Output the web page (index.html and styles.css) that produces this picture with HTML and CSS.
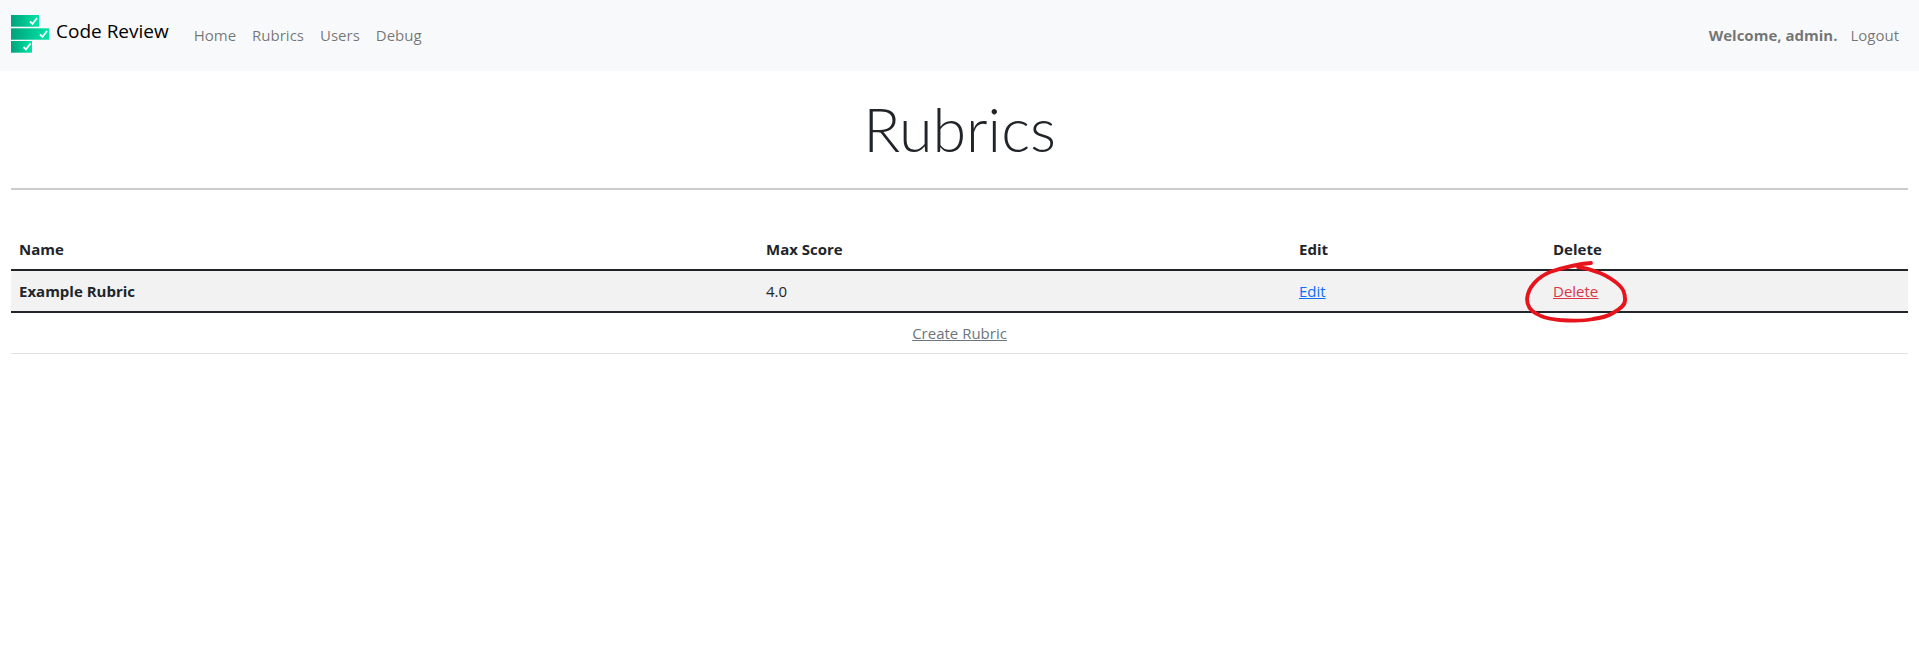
FILE: index.html
```html
<!DOCTYPE html>
<html lang="en">
<head>
    <meta charset="UTF-8">
    <title>Rubrics</title>
    <link rel="stylesheet" href="styles.css">
</head>
<body>
    <nav class="navbar">
        <a class="brand" href="#">
            <svg class="logo" width="38" height="38" viewBox="0 0 38 38">
                <defs>
                    <linearGradient id="bar" x1="0" y1="0" x2="1" y2="0">
                        <stop offset="0" stop-color="#00a27c"/>
                        <stop offset="1" stop-color="#00e6a8"/>
                    </linearGradient>
                </defs>
                <rect x="0" y="0" width="28" height="11.700" fill="url(#bar)"/>
                <rect x="0" y="13.300" width="38" height="11.400" fill="url(#bar)"/>
                <rect x="0" y="26" width="21" height="11.700" fill="url(#bar)"/>
                <path d="M19 6.500l2.500 2.500 4.500-6M29 19.500l2.500 2.500 4.500-6M12.500 32l2.500 2.500 4.500-6" fill="none" stroke="#fff" stroke-width="1.800"/>
            </svg>
            <span>Code Review</span>
        </a>
        <ul class="nav-links">
            <li><a href="#">Home</a></li>
            <li><a href="#">Rubrics</a></li>
            <li><a href="#">Users</a></li>
            <li><a href="#">Debug</a></li>
        </ul>
        <div class="nav-user">
            <b>Welcome, admin.</b>
            <a href="#">Logout</a>
        </div>
    </nav>

    <main class="content">
        <h1 class="title">Rubrics</h1>
        <hr class="rule">

        <table class="rubrics">
            <colgroup>
                <col class="col-name">
                <col class="col-score">
                <col class="col-edit">
                <col class="col-delete">
            </colgroup>
            <thead>
                <tr>
                    <th>Name</th>
                    <th>Max Score</th>
                    <th>Edit</th>
                    <th>Delete</th>
                </tr>
            </thead>
            <tbody>
                <tr>
                    <th>Example Rubric</th>
                    <td>4.0</td>
                    <td><a class="edit" href="#">Edit</a></td>
                    <td><a class="delete" href="#">Delete</a></td>
                </tr>
            </tbody>
            <tfoot>
                <tr>
                    <td colspan="4"><a class="create" href="#">Create Rubric</a></td>
                </tr>
            </tfoot>
        </table>
    </main>

    <!-- red pen scribble around the delete link -->
    <svg class="scribble" width="1919" height="669" viewBox="0 0 1919 669">
        <path d="M1591 263 C1578 264 1562 268 1550 272 C1538 277 1528 287 1527 299 C1527 307 1531 311 1537 314 C1545 319 1552 319 1560 320 C1572 321 1584 321 1593 319 C1601 318 1608 316 1613 313 C1620 309 1626 305 1625 299 C1625 293 1624 290 1620 286 C1614 280 1607 276 1600 273 C1593 270 1586 268 1578 267" fill="none" stroke="#e8141c" stroke-width="3.800" stroke-linecap="round"/>
    </svg>
</body>
</html>
```

FILE: styles.css
```css
body {
    font-family: "Open Sans", "Noto Sans", sans-serif;
    font-size: 15px;
    line-height: 24px;
    color: #212529;
    background-color: #fff;
    margin: 0;
}
a {
    color: #0d6efd;
}
.navbar {
    display: flex;
    align-items: center;
    height: 69px;
    padding: 0 12px 2px 11px;
    background-color: #f8f9fa;
}
.brand {
    display: flex;
    align-items: center;
    margin-right: 17px;
    margin-bottom: 7px;
    font-size: 19px;
    color: #000;
    text-decoration: none;
}
.logo {
    margin-top: 6px;
    margin-right: 7px;
}
.nav-links {
    display: flex;
    list-style: none;
    margin: 0;
    padding: 0;
    flex: 1;
}
.nav-links a, .nav-user a {
    display: block;
    padding: 8px;
    color: rgba(0, 0, 0, 0.55);
    text-decoration: none;
}
.nav-user {
    display: flex;
    align-items: center;
    color: rgba(0, 0, 0, 0.55);
}
.nav-user b {
    margin-right: 5px;
}
.content {
    padding: 0 11px 0 11px;
}
.title {
    margin: 15px 0 0 0;
    text-align: center;
    font-family: Lato, "Open Sans", sans-serif;
    font-size: 61px;
    font-weight: 300;
    line-height: 86px;
}
.rule {
    margin: 16px 0 39px 0;
    border: 0;
    border-top: 2px solid #ccc;
}
.rubrics {
    width: 100%;
    border-collapse: collapse;
    table-layout: fixed;
}
.col-name { width: 747px; }
.col-score { width: 533px; }
.col-edit { width: 254px; }
.rubrics th, .rubrics td {
    padding: 8px;
    text-align: left;
    color: #212529;
}
.rubrics thead th {
    border-bottom: 2px solid #212529;
}
.rubrics tbody tr {
    background-color: #f2f2f2;
    border-bottom: 2px solid #212529;
}
.rubrics tfoot td {
    text-align: center;
    border-bottom: 1px solid #dee2e6;
}
.delete {
    color: #dc3545;
}
.create {
    color: #6c757d;
}
.scribble {
    position: absolute;
    top: 0;
    left: 0;
    pointer-events: none;
}
```
